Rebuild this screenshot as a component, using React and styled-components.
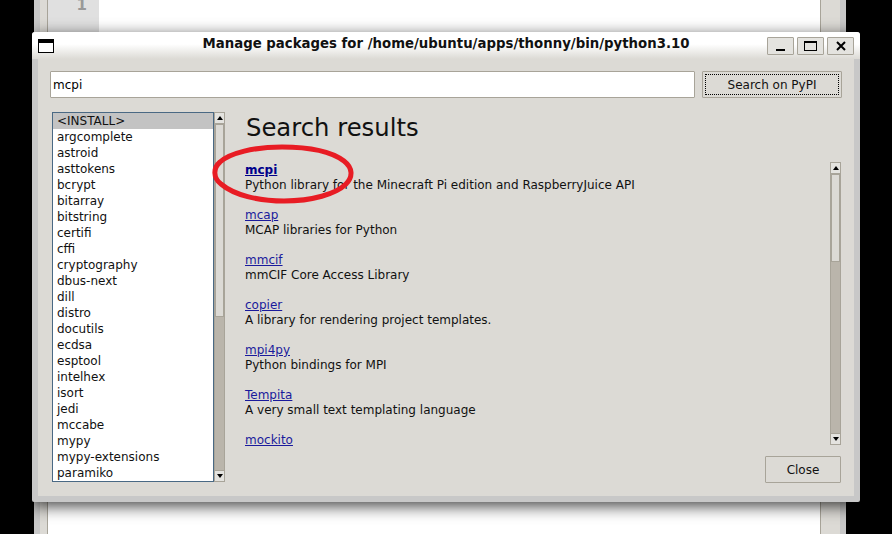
import styled, { createGlobalStyle } from "styled-components";

const packages = [
  "<INSTALL>", "argcomplete", "astroid", "asttokens", "bcrypt", "bitarray", "bitstring", "certifi",
  "cffi", "cryptography", "dbus-next", "dill", "distro", "docutils", "ecdsa", "esptool",
  "intelhex", "isort", "jedi", "mccabe", "mypy", "mypy-extensions", "paramiko",
];

const results = [
  { name: "mcpi", text: "Python library for the Minecraft Pi edition and RaspberryJuice API", first: true },
  { name: "mcap", text: "MCAP libraries for Python" },
  { name: "mmcif", text: "mmCIF Core Access Library" },
  { name: "copier", text: "A library for rendering project templates." },
  { name: "mpi4py", text: "Python bindings for MPI" },
  { name: "Tempita", text: "A very small text templating language" },
  { name: "mockito", text: "" },
];

const App = () => (
  <Desktop>
    <GlobalStyle />
    <BackWindow>
      <Edge />
      <Gutter>1</Gutter>
      <Editor />
      <BackBar />
    </BackWindow>

    <Dialog>
      <TitleBar>
        <MenuIcon />
        <Title>Manage packages for /home/ubuntu/apps/thonny/bin/python3.10</Title>
        <WinButtons>
          <WinButton>
            <svg width="10" height="10" viewBox="0 0 10 10">
              <rect x="0" y="8" width="9" height="2" fill="#000" />
            </svg>
          </WinButton>
          <WinButton>
            <svg width="14" height="10" viewBox="0 0 14 10">
              <rect x="0.5" y="0.5" width="12" height="9" fill="none" stroke="#000" />
              <rect x="0" y="0" width="13" height="2" fill="#000" />
            </svg>
          </WinButton>
          <WinButton>
            <svg width="10" height="10" viewBox="0 0 10 10">
              <path d="M1 1L9 9M9 1L1 9" stroke="#000" strokeWidth="2" />
            </svg>
          </WinButton>
        </WinButtons>
      </TitleBar>

      <Body>
        <SearchRow>
          <SearchInput defaultValue="mcpi" />
          <SearchButton>
            <FocusRing>Search on PyPI</FocusRing>
          </SearchButton>
        </SearchRow>

        <Main>
          <ListSide>
            <ListBox>
              {packages.map((p) => (
                <ListItem key={p} $selected={p === "<INSTALL>"}>
                  {p}
                </ListItem>
              ))}
            </ListBox>
            <ScrollBar>
              <ScrollArrow>
                <Triangle />
              </ScrollArrow>
              <ScrollTrack>
                <ScrollThumb $height={193} />
              </ScrollTrack>
              <ScrollArrow>
                <Triangle $down />
              </ScrollArrow>
            </ScrollBar>
          </ListSide>

          <ResultSide>
            <Heading>Search results</Heading>
            <ResultArea>
              <ResultList>
                {results.map((r) => (
                  <Result key={r.name}>
                    <PackageLink $bold={r.first}>{r.name}</PackageLink>
                    {r.text && <Summary>{r.text}</Summary>}
                  </Result>
                ))}
              </ResultList>
              <ScrollBar>
                <ScrollArrow>
                  <Triangle />
                </ScrollArrow>
                <ScrollTrack>
                  <ScrollThumb $height={88} />
                </ScrollTrack>
                <ScrollArrow>
                  <Triangle $down />
                </ScrollArrow>
              </ScrollBar>
            </ResultArea>
            <Footer>
              <CloseButton>Close</CloseButton>
            </Footer>
          </ResultSide>
        </Main>
      </Body>

      <Marker width="146" height="64" viewBox="0 0 146 64">
        <path
          d="M72 5C44 5 20 11 10 20C3 26 3 36 11 42C24 53 48 59 74 59C102 59 126 52 136 42C143 35 143 26 134 19C122 10 100 5 72 5Z"
          fill="none"
          stroke="#e81c24"
          strokeWidth="5"
        />
      </Marker>
    </Dialog>
  </Desktop>
);

export default App;

const GlobalStyle = createGlobalStyle`
  html, body {
    margin: 0;
    padding: 0;
    background: #000;
    overflow: hidden;
  }
`;

const Desktop = styled.div`
  position: relative;
  width: 892px;
  height: 534px;
  background: #000;
  overflow: hidden;
  font-family: "DejaVu Sans", sans-serif;
  font-size: 12px;
  color: #000;
`;

const BackWindow = styled.div`
  display: flex;
  width: 812px;
  height: 534px;
  margin-left: 34px;
  background: #fff;
`;

const Edge = styled.div`
  width: 14px;
  box-sizing: border-box;
  background: #dcdad5;
  border-left: 6px solid #c8c8c8;
  border-right: 1px solid #a8a499;
`;

const Gutter = styled.div`
  width: 51px;
  box-sizing: border-box;
  padding: 0 12px 0 0;
  text-align: right;
  background: #e0e0e0;
  color: #999;
  font-weight: bold;
  font-size: 15px;
  line-height: 10px;
  height: 32px;
`;

const Editor = styled.div`
  width: 721px;
  background: #fff;
`;

const BackBar = styled.div`
  width: 26px;
  box-sizing: border-box;
  background: #dcdad5;
  border-left: 1px solid #a8a499;
  border-right: 6px solid #c8c8c8;
`;

const Dialog = styled.div`
  position: absolute;
  left: 32px;
  top: 32px;
  width: 828px;
  height: 470px;
  display: flex;
  flex-direction: column;
  border-radius: 3px 3px 2px 2px;
  background: #c8c8c8;
  box-shadow: 0 4px 16px rgba(0, 0, 0, 0.75);
`;

const TitleBar = styled.div`
  flex: none;
  height: 27px;
  display: flex;
  align-items: center;
  position: relative;
  padding: 0 6px;
  border-radius: 3px 3px 0 0;
  background: linear-gradient(#ffffff 0%, #ffffff 45%, #dcdad5 100%);
`;

const MenuIcon = styled.div`
  width: 14px;
  height: 9px;
  border: 1px solid #000;
  border-top-width: 4px;
  background: #fff;
`;

const Title = styled.div`
  position: absolute;
  left: 0;
  right: 0;
  top: 4px;
  text-align: center;
  font-weight: bold;
  font-size: 13.3px;
  line-height: 16px;
  color: #111;
`;

const WinButtons = styled.div`
  margin-left: auto;
  display: flex;
  gap: 3px;
  position: relative;
`;

const WinButton = styled.div`
  width: 27px;
  height: 18px;
  box-sizing: border-box;
  display: flex;
  align-items: center;
  justify-content: center;
  border: 1px solid #a8a499;
  border-radius: 1px;
  background: #e4e3df;
`;

const Body = styled.div`
  flex: 1;
  margin: 0 6px 6px;
  padding: 12px 13px 13px 12px;
  display: flex;
  flex-direction: column;
  background: #dcdad5;
`;

const SearchRow = styled.div`
  display: flex;
  gap: 7px;
  height: 27px;
  flex: none;
`;

const SearchInput = styled.input`
  width: 645px;
  flex: none;
  box-sizing: border-box;
  margin: 0;
  padding: 0 2px;
  border: 1px solid #a8a499;
  border-radius: 1px;
  background: #fff;
  outline: none;
  font: 12px "DejaVu Sans", sans-serif;
  color: #000;
`;

const SearchButton = styled.div`
  width: 140px;
  flex: none;
  box-sizing: border-box;
  padding: 2px;
  border: 1px solid #a8a499;
  border-radius: 1px;
  background: #dcdad5;
`;

const FocusRing = styled.div`
  height: 100%;
  box-sizing: border-box;
  display: flex;
  align-items: center;
  justify-content: center;
  border: 1px dotted #000;
  color: #111;
`;

const Main = styled.div`
  flex: 1;
  display: flex;
  margin-top: 14px;
  min-height: 0;
`;

const ListSide = styled.div`
  display: flex;
  margin-left: 2px;
  width: 173px;
  height: 370px;
`;

const ListBox = styled.div`
  width: 162px;
  box-sizing: border-box;
  border: 1px solid #4a6984;
  background: #fff;
  overflow: hidden;
`;

const ListItem = styled.div`
  height: 16px;
  padding-left: 4px;
  line-height: 16px;
  white-space: nowrap;
  color: #111;
  background: ${(p) => (p.$selected ? "#c3c3c3" : "transparent")};
`;

const ScrollBar = styled.div`
  width: 11px;
  flex: none;
  display: flex;
  flex-direction: column;
  box-sizing: border-box;
  background: #bab5ab;
  border: 1px solid #a8a499;
`;

const ScrollArrow = styled.div`
  height: 10px;
  flex: none;
  display: flex;
  align-items: center;
  justify-content: center;
  background: #e4e3df;
`;

const Triangle = styled.div`
  width: 0;
  height: 0;
  border-left: 3.5px solid transparent;
  border-right: 3.5px solid transparent;
  ${(p) => (p.$down ? "border-top: 4px solid #000;" : "border-bottom: 4px solid #000;")}
`;

const ScrollTrack = styled.div`
  flex: 1;
  border-top: 1px solid #a8a499;
  border-bottom: 1px solid #a8a499;
`;

const ScrollThumb = styled.div`
  height: ${(p) => p.$height}px;
  box-sizing: border-box;
  border: 1px solid #a8a499;
  background: #dcdad5;
`;

const ResultSide = styled.div`
  flex: 1;
  display: flex;
  flex-direction: column;
  margin-left: 20px;
  min-width: 0;
`;

const Heading = styled.h1`
  margin: 0;
  height: 50px;
  padding: 1px 0 0 1px;
  box-sizing: border-box;
  font-size: 24.3px;
  font-weight: normal;
  line-height: 30px;
  color: #111;
`;

const ResultArea = styled.div`
  display: flex;
  justify-content: space-between;
  height: 283px;
  flex: none;
`;

const ResultList = styled.div`
  display: flex;
  flex-direction: column;
  gap: 15px;
  padding-top: 1px;
`;

const Result = styled.div`
  flex: none;
  line-height: 15px;
`;

const PackageLink = styled.a`
  display: block;
  color: ${(p) => (p.$bold ? "#00008b" : "#1a1a9c")};
  font-weight: ${(p) => (p.$bold ? "bold" : "normal")};
  text-decoration: underline;
  cursor: pointer;
`;

const Summary = styled.div`
  color: #111;
`;

const Footer = styled.div`
  display: flex;
  justify-content: flex-end;
  margin-top: 11px;
`;

const CloseButton = styled.div`
  width: 76px;
  height: 27px;
  box-sizing: border-box;
  display: flex;
  align-items: center;
  justify-content: center;
  border: 1px solid #a8a499;
  border-radius: 1px;
  background: #dcdad5;
  color: #111;
`;

const Marker = styled.svg`
  position: absolute;
  left: 178px;
  top: 110px;
  pointer-events: none;
`;
